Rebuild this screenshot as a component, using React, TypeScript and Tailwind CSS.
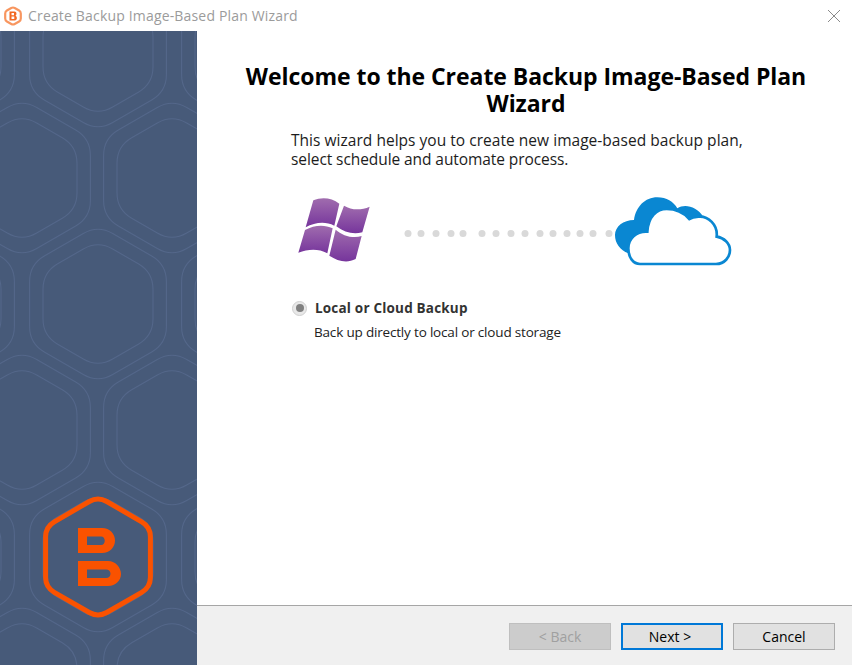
const hexPath = (cx: number, cy: number, r: number, cut: number) => {
  const pts = [0, 1, 2, 3, 4, 5].map((i) => {
    const a = (Math.PI / 3) * i - Math.PI / 2;
    return [cx + r * Math.cos(a), cy + r * Math.sin(a)];
  });
  let d = "";
  pts.forEach((p, i) => {
    const prev = pts[(i + 5) % 6];
    const next = pts[(i + 1) % 6];
    const t = cut / r;
    const a = [p[0] + (prev[0] - p[0]) * t, p[1] + (prev[1] - p[1]) * t];
    const b = [p[0] + (next[0] - p[0]) * t, p[1] + (next[1] - p[1]) * t];
    d += `${i === 0 ? "M" : "L"}${a[0].toFixed(1)} ${a[1].toFixed(1)}Q${p[0].toFixed(1)} ${p[1].toFixed(1)} ${b[0].toFixed(1)} ${b[1].toFixed(1)}`;
  });
  return d + "Z";
};

// hexagon centres, page coordinates minus the 31px title bar
const CENTERS = [
  [98, 21], [22, 147], [172, 147], [-54, 21], [250, 21],
  [98, 273], [22, 399], [172, 399], [-54, 273], [250, 273],
  [98, 526], [22, 652], [172, 652], [-54, 526], [250, 526],
];

const DOTS = [408, 421, 436, 451, 463, 482, 496, 511, 525, 540, 553, 567, 580, 593, 609];

function SidePattern() {
  return (
    <svg width="197" height="634" viewBox="0 0 197 634" className="block">
      {CENTERS.map(([x, y]) => (
        <g key={`${x}-${y}`} fill="none" stroke="#54678a" strokeWidth="1.1">
          <path d={hexPath(x, y, 79, 17)} />
          <path d={hexPath(x, y, 63.5, 17)} />
        </g>
      ))}
      <path d={hexPath(98, 526, 60.5, 10)} fill="none" stroke="#fa5200" strokeWidth="5" />
      <path
        fillRule="evenodd"
        fill="#fa5200"
        d="M78 497H102C110 497 115 503 115 509.500C115 516 110 522 102 522H78ZM87 505.500V514H101C106 514 106 505.500 101 505.500Z"
      />
      <path
        fillRule="evenodd"
        fill="#fa5200"
        d="M78 530H108C116 530 121 537 121 543C121 549 116 555 108 555H78ZM87 538.500V547H106C112 547 112 538.500 106 538.500Z"
      />
    </svg>
  );
}

function Illustration() {
  return (
    <svg width="470" height="90" viewBox="0 0 470 90" className="block">
      <defs>
        <linearGradient id="flag" x1="0" y1="0" x2="0" y2="1">
          <stop offset="0" stopColor="#a06cae" />
          <stop offset="1" stopColor="#76359c" />
        </linearGradient>
      </defs>
      <g transform="scale(0.3333)">
        <path fill="url(#flag)" d="M85 46C110 36 140 38 163 56L148 122C120 108 90 112 62 127L85 46Z" />
        <path fill="url(#flag)" d="M177 62C200 76 228 76 254 65L232 142C205 150 178 142 154 124Z" />
        <path fill="url(#flag)" d="M60 135C88 120 118 118 143 130L127 205C100 190 70 192 40 203Z" />
        <path fill="url(#flag)" d="M152 134C172 152 205 162 230 153L212 222C185 236 158 228 133 212Z" />
      </g>
      {DOTS.map((x) => (
        <circle key={x} cx={x - 285} cy="48.500" r="3.500" fill="#d9d9d9" />
      ))}
      <g transform="translate(275 0) scale(0.3333)">
        <path
          fill="#0a87d2"
          d="M205 205C180 195 165 175 165 150C165 125 190 105 222 105C228 65 255 37 292 37C320 37 340 50 352 70C375 55 410 65 430 95L300 200Z"
        />
        <path
          fill="#fff"
          stroke="#0a87d2"
          strokeWidth="8"
          d="M240 237H468C495 237 510 215 510 195C510 175 492 158 470 155C474 120 445 92 415 95C405 96 395 98 388 102C370 82 345 72 320 72C290 72 265 95 262 140C230 138 205 160 205 190C205 218 220 237 240 237Z"
        />
      </g>
    </svg>
  );
}

export default function App() {
  return (
    <div
      className="flex h-[665px] w-[852px] flex-col overflow-hidden bg-white"
      style={{ fontFamily: '"Open Sans", "Noto Sans", sans-serif' }}
    >
      <header className="flex h-[31px] shrink-0 items-center pl-[4px] pr-3">
        <svg width="18" height="20" viewBox="0 0 18 20" className="shrink-0">
          <path d={hexPath(9, 10, 9, 2)} fill="none" stroke="#f8965f" strokeWidth="2.2" />
          <path fill="#f26a25" fillRule="evenodd" d="M5.500 5.500H10.500C13 5.500 13 9.200 11.300 9.800C13.500 10.300 13.500 14.500 10.800 14.500H5.500ZM7.500 7V9.200H10V7ZM7.500 10.600V13H10.300V10.600Z" />
        </svg>
        <span className="ml-1.5 text-[14px] tracking-[0.17px] text-[#9b9b9b]">
          Create Backup Image-Based Plan Wizard
        </span>
        <svg width="12" height="12" viewBox="0 0 12 12" className="ml-auto" stroke="#8a8a8a" strokeWidth="1">
          <path d="M0 0L12 12M12 0L0 12" />
        </svg>
      </header>

      <div className="flex min-h-0 flex-1">
        <aside className="w-[197px] shrink-0 overflow-hidden bg-[#475a79]">
          <SidePattern />
        </aside>

        <main className="flex min-w-0 flex-1 flex-col">
          <div className="flex-1 pt-[32px]">
            <h1 className="mx-auto w-[600px] pl-[3px] text-center text-[23px] font-bold leading-[27px] tracking-[-0.05px] text-black">
              Welcome to the Create Backup Image-Based Plan Wizard
            </h1>
            <p className="ml-[94px] mt-[14px] w-[500px] text-[15.500px] leading-[19px] tracking-[0.03px] text-[#1c1c1c]">
              This wizard helps you to create new image-based backup plan,
              <br />
              <span className="tracking-[-0.08px]">select schedule and automate process.</span>
            </p>
            <div className="ml-[88px] mt-[16px]">
              <Illustration />
            </div>
            <div className="ml-[95px] mt-[23px] flex items-center">
              <span className="flex h-[15px] w-[15px] items-center justify-center rounded-full border border-[#d0d0d0] bg-[#e8e8e8]">
                <span className="h-[8px] w-[8px] rounded-full bg-[#808080]" />
              </span>
              <span className="ml-2 text-[13.500px] font-bold tracking-[0.19px] text-[#333333]">Local or Cloud Backup</span>
            </div>
            <p className="ml-[117px] mt-[4px] text-[13.500px] tracking-[-0.18px] text-[#222222]">
              Back up directly to local or cloud storage
            </p>
          </div>

          <footer className="flex h-[60px] shrink-0 items-start justify-end gap-[10px] border-t border-[#a6a6a6] bg-[#f0f0f0] pr-[17px] pt-[17px]">
            <button className="h-[27px] w-[102px] border border-[#bfbfbf] bg-[#cccccc] text-[14px] text-[#a0a0a0]">&lt; Back</button>
            <button className="h-[27px] w-[102px] border-2 border-[#0078d7] bg-[#e1e1e1] pr-[4px] text-[14px] text-black">Next &gt;</button>
            <button className="h-[27px] w-[102px] border border-[#adadad] bg-[#e1e1e1] text-[14px] text-black">Cancel</button>
          </footer>
        </main>
      </div>
    </div>
  );
}
